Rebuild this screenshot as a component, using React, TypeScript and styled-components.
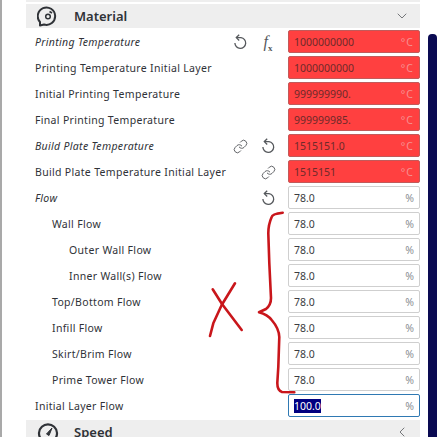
import styled, { createGlobalStyle } from "styled-components"
import { ChevronDown, ChevronLeft, Link } from "lucide-react"

const GlobalStyle = createGlobalStyle`
html, body {
  margin: 0;
  padding: 0;
  background: #ffffff;
  overflow: hidden;
}
`;

type Setting = {
  label: string
  value: string
  unit: string
  indent?: number
  italic?: boolean
  error?: boolean
  selected?: boolean
  link?: boolean
  reset?: boolean
  fx?: boolean
}

const settings: Setting[] = [
  { label: "Printing Temperature", value: "1000000000", unit: "°C", italic: true, error: true, reset: true, fx: true },
  { label: "Printing Temperature Initial Layer", value: "1000000000", unit: "°C", error: true },
  { label: "Initial Printing Temperature", value: "999999990.", unit: "°C", error: true },
  { label: "Final Printing Temperature", value: "999999985.", unit: "°C", error: true },
  { label: "Build Plate Temperature", value: "1515151.0", unit: "°C", italic: true, error: true, link: true, reset: true },
  { label: "Build Plate Temperature Initial Layer", value: "1515151", unit: "°C", error: true, link: true },
  { label: "Flow", value: "78.0", unit: "%", italic: true, reset: true },
  { label: "Wall Flow", value: "78.0", unit: "%", indent: 1 },
  { label: "Outer Wall Flow", value: "78.0", unit: "%", indent: 2 },
  { label: "Inner Wall(s) Flow", value: "78.0", unit: "%", indent: 2 },
  { label: "Top/Bottom Flow", value: "78.0", unit: "%", indent: 1 },
  { label: "Infill Flow", value: "78.0", unit: "%", indent: 1 },
  { label: "Skirt/Brim Flow", value: "78.0", unit: "%", indent: 1 },
  { label: "Prime Tower Flow", value: "78.0", unit: "%", indent: 1 },
  { label: "Initial Layer Flow", value: "100.0", unit: "%", selected: true },
]

const ResetIcon = () => (
  <svg width="16" height="16" viewBox="0 0 16 16" fill="none" stroke="#55585c" strokeWidth="1.3">
    <path d="M4.6 3.6 H9 A5.4 5.4 0 1 1 2.9 9" />
    <path d="M7.2 0.7 L4.3 3.6 L7.2 6.5" />
  </svg>
)

const MaterialIcon = () => (
  <svg width="22" height="22" viewBox="0 0 22 22" fill="none" stroke="#2f3237">
    <path d="M3 20.5 V17 A8.7 8.7 0 1 1 7 19.5 Z" strokeWidth="2" strokeLinejoin="round" />
    <circle cx="11" cy="11.5" r="2.3" strokeWidth="1.5" />
    <path d="M12.5 6.5 L15 8" strokeWidth="1.6" />
  </svg>
)

const SpeedIcon = () => (
  <svg width="22" height="22" viewBox="0 0 22 22" fill="none" stroke="#2f3237">
    <path d="M4 18 A9 9 0 1 1 18 18" strokeWidth="2.2" />
    <path d="M9.5 13 L15 7 L12 14.5 Z" fill="#2f3237" strokeWidth="1" />
  </svg>
)

const App = () => {
  return (
    <Page>
      <GlobalStyle />
      <LeftEdge />
      <Panel>
        <PrevSection />
        <Header>
          <MaterialIcon />
          <HeaderTitle>Material</HeaderTitle>
          <ChevronDown size={16} strokeWidth={1.2} color="#55585c" />
        </Header>
        <Rows>
          {settings.map((s) => (
            <Row key={s.label} $indent={s.indent || 0}>
              <Label $italic={!!s.italic}>{s.label}</Label>
              <Actions>
                {s.link && <Link size={15} strokeWidth={1.5} color="#55585c" />}
                {s.reset && <ResetIcon />}
                {s.fx && <Fx>f<sub>x</sub></Fx>}
              </Actions>
              <Field $error={!!s.error} $selected={!!s.selected}>
                {s.selected ? <Selected>{s.value}</Selected> : <span>{s.value}</span>}
                <Unit $error={!!s.error}>{s.unit}</Unit>
              </Field>
            </Row>
          ))}
        </Rows>
        <Header>
          <SpeedIcon />
          <HeaderTitle>Speed</HeaderTitle>
          <ChevronLeft size={16} strokeWidth={1.2} color="#55585c" />
        </Header>
      </Panel>
      <Scrollbar />
      <Scribble width="440" height="437" viewBox="0 0 440 437" fill="none" stroke="#c9161b" strokeWidth="2.6" strokeLinecap="round" strokeLinejoin="round">
        <path d="M282.7 212.7 C276 213.5 272 215 271.7 217 C269 223 268.3 228 268.3 233.3 L269.3 263 L271 298 C271 304 268.5 307 266 309 L259 312.3 C265 314 269 316.5 271.7 320 C276 325 279 330 279.3 337 L278.3 367 L277.3 383 C277.3 388 279 391 282 392 L294.3 392.3" />
        <path d="M212.7 289.3 L222 304 L241.7 330" />
        <path d="M235 283.3 L221.7 305 L213.3 323.3 L210 336" />
      </Scribble>
    </Page>
  )
}

export default App

const Page = styled.div`
width: 440px;
height: 437px;
display: flex;
overflow: hidden;
position: relative;
background-color: #ffffff;
font-family: "Noto Sans", "Open Sans", sans-serif;
`;
const LeftEdge = styled.div`
width: 2px;
flex-shrink: 0;
background-color: #a9a9a9;
`;
const Panel = styled.div`
width: 394px;
margin-left: 24px;
flex-shrink: 0;
display: flex;
flex-direction: column;
`;
const PrevSection = styled.div`
height: 2px;
margin-bottom: 2px;
flex-shrink: 0;
background-color: #eeeeee;
`;
const Header = styled.div`
height: 24px;
flex-shrink: 0;
display: flex;
align-items: center;
padding: 0 10px 0 11px;
background-color: #eeeeee;
`;
const HeaderTitle = styled.div`
flex: 1;
margin-left: 15px;
font-size: 13px;
font-weight: 600;
color: #2f3237;
`;
const Rows = styled.div`
display: flex;
flex-direction: column;
flex-shrink: 0;
padding-bottom: 2px;
`;
const Row = styled.div<{ $indent: number }>`
height: 26px;
flex-shrink: 0;
display: flex;
align-items: center;
padding-left: ${(p) => 9 + p.$indent * 17}px;
`;
const Label = styled.div<{ $italic: boolean }>`
flex: 1;
margin-top: 2px;
white-space: nowrap;
font-size: 10.5px;
letter-spacing: 0.32px;
font-style: ${(p) => (p.$italic ? "italic" : "normal")};
color: #2f3237;
`;
const Actions = styled.div`
display: flex;
align-items: center;
gap: 12px;
margin: 2px 12px 0 0;
`;
const Fx = styled.div`
width: 16px;
font-family: "Liberation Serif", serif;
font-style: italic;
font-size: 16px;
color: #55585c;
text-align: center;
sub {
  font-size: 9px;
  font-weight: 700;
  font-style: normal;
  line-height: 0;
}
`;
const Field = styled.div<{ $error: boolean; $selected: boolean }>`
width: 132px;
height: 23px;
margin-top: 1px;
box-sizing: border-box;
flex-shrink: 0;
display: flex;
align-items: center;
justify-content: space-between;
padding: 0 5px;
border-radius: 2px;
font-size: 10.5px;
color: ${(p) => (p.$error ? "#6e2a2a" : "#3a3d41")};
background-color: ${(p) => (p.$error ? "#ff4040" : "#ffffff")};
border: 1px solid ${(p) => (p.$error ? "#c25a5a" : p.$selected ? "#2f79b3" : "#cfcfcf")};
`;
const Selected = styled.span`
background-color: #000080;
color: #ffffff;
line-height: 14px;
`;
const Unit = styled.span<{ $error: boolean }>`
color: ${(p) => (p.$error ? "#f59090" : "#8c8f93")};
letter-spacing: ${(p) => (p.$error ? "1px" : "0")};
`;
const Scrollbar = styled.div`
width: 9px;
margin: 34px 0 0 8px;
flex-shrink: 0;
border-radius: 4px 4px 0 0;
background-color: #0a0a52;
`;
const Scribble = styled.svg`
position: absolute;
left: 0;
top: 0;
pointer-events: none;
`;
